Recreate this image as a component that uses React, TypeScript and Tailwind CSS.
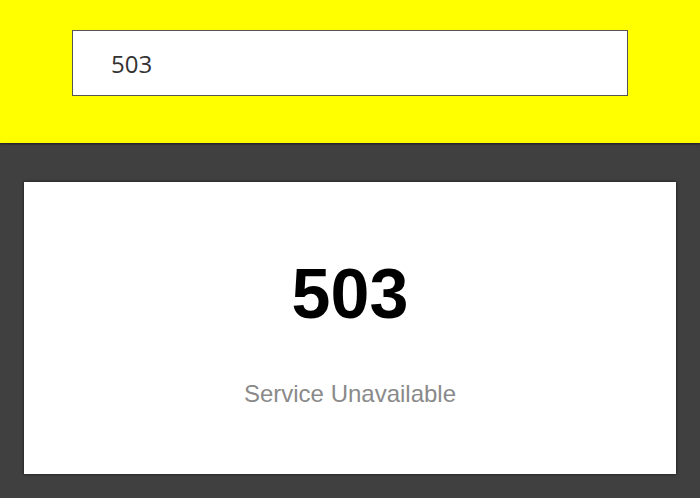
export default function App() {
  return (
    <div className="min-h-[498px] bg-[#404040] font-['Liberation_Sans',Arial,sans-serif]">
      <header className="h-[143px] bg-[#ffff00] px-[72px] pt-[30px] shadow-[0_1px_2px_rgba(0,0,0,0.6)]">
        <input
          type="text"
          defaultValue="503"
          className="block h-[66px] w-full border border-[#555] bg-white px-[38px] font-['Open_Sans',sans-serif] text-[24px] text-[#333] outline-none"
        />
      </header>
      <main className="px-[24px] pt-[39px] pb-[24px]">
        <div className="flex h-[292px] flex-col items-center bg-white shadow-[0_0_3px_rgba(0,0,0,0.7)]">
          <h1 className="mt-[77px] text-[70px] font-bold leading-none text-black">503</h1>
          <p className="mt-[53px] text-[24px] leading-none text-[#8a8a8a]">Service Unavailable</p>
        </div>
      </main>
    </div>
  );
}
